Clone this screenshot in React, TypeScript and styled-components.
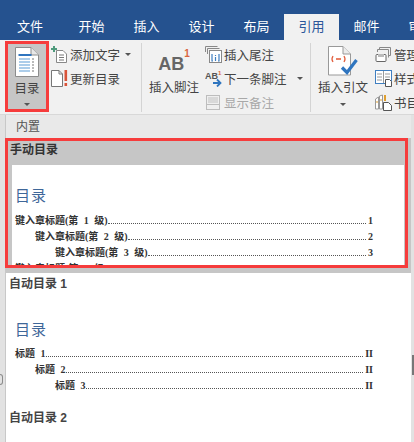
import { ReactNode } from 'react';
import styled, { createGlobalStyle } from 'styled-components';

const GlobalStyle = createGlobalStyle`
  html, body {
    margin: 0;
    padding: 0;
    background: #e2e2e2;
  }
  *, *::before, *::after {
    box-sizing: border-box;
  }
`;

const Page = styled.div`
  position: relative;
  width: 414px;
  height: 442px;
  overflow: hidden;
  background: #e2e2e2;
  color: #444;
  font-family: 'Liberation Sans', 'Noto Sans CJK SC', sans-serif;
  font-size: 12.5px;
`;

const TabBar = styled.div`
  display: flex;
  align-items: flex-end;
  height: 40px;
  background: #25528f;
  white-space: nowrap;
`;

const Tab = styled.div<{ $active?: boolean; $first?: boolean }>`
  flex: none;
  width: ${(p) => (p.$first ? '60px' : '55px')};
  margin-right: ${(p) => (p.$first ? '4px' : '0')};
  height: 26px;
  line-height: 25px;
  text-align: center;
  font-size: 13px;
  color: ${(p) => (p.$active ? '#2b579a' : '#fff')};
  background: ${(p) => (p.$active ? '#f1f1f1' : 'transparent')};
`;

const Ribbon = styled.div`
  display: flex;
  height: 75px;
  padding: 1px 0 3px 5px;
  background: #f1f1f1;
  border-bottom: 1px solid #d8d8d8;
`;

const LargeButton = styled.div<{ $width: number; $left?: number; $selected?: boolean }>`
  flex: none;
  display: flex;
  flex-direction: column;
  align-items: center;
  width: ${(p) => p.$width}px;
  height: 71px;
  margin-left: ${(p) => p.$left ?? 0}px;
  padding-top: ${(p) => (p.$selected ? '2px' : '4px')};
  background: ${(p) => (p.$selected ? '#c6c6c6' : 'transparent')};
  border: ${(p) => (p.$selected ? '3px solid #f63c3c' : 'none')};
  white-space: nowrap;
`;

const LargeIcon = styled.div`
  flex: none;
  height: 31px;
  display: flex;
  align-items: center;
`;

const LargeLabel = styled.div`
  margin-top: 3px;
  line-height: 18px;
`;

const Caret = styled.span<{ $top?: number; $left?: number }>`
  display: block;
  flex: none;
  width: 0;
  height: 0;
  margin-top: ${(p) => p.$top ?? 0}px;
  margin-left: ${(p) => p.$left ?? 0}px;
  border-left: 3px solid transparent;
  border-right: 3px solid transparent;
  border-top: 3px solid #555;
`;

const SmallColumn = styled.div<{ $width: number; $left: number }>`
  flex: none;
  display: flex;
  flex-direction: column;
  width: ${(p) => p.$width}px;
  margin-left: ${(p) => p.$left}px;
  padding-top: 1px;
`;

const SmallRow = styled.div<{ $disabled?: boolean }>`
  flex: none;
  display: flex;
  align-items: center;
  height: 24px;
  white-space: nowrap;
  color: ${(p) => (p.$disabled ? '#a8a8a8' : '#444')};
`;

const SmallIcon = styled.span`
  flex: none;
  display: flex;
  width: 19px;
`;

const Separator = styled.div`
  flex: none;
  width: 1px;
  height: 69px;
  margin-top: 2px;
  background: #d4d4d4;
`;

const FootnoteMark = styled.div`
  display: flex;
  align-items: flex-start;
  height: 26px;
  font-size: 18px;
  font-weight: 700;
  line-height: 32px;
  color: #666;
`;

const FootnoteNumber = styled.span`
  font-size: 10px;
  line-height: 12px;
  color: #d9653f;
`;

const Menu = styled.div`
  width: 406px;
  height: 327px;
  margin-left: 5px;
  background: #fff;
  border-left: 1px solid #c8c8c8;
`;

const MenuHeader = styled.div`
  height: 23px;
  padding-left: 10px;
  line-height: 24px;
  font-size: 12px;
  color: #555;
  background: #e9e9e9;
`;

const GalleryItem = styled.div<{ $selected?: boolean }>`
  position: relative;
  padding-bottom: ${(p) => (p.$selected ? '5px' : '0')};
  background: ${(p) => (p.$selected ? '#c6c6c6' : '#fff')};
  &::after {
    content: '';
    display: ${(p) => (p.$selected ? 'block' : 'none')};
    position: absolute;
    left: -1px;
    top: 0;
    width: 403px;
    height: 130px;
    border: 3px solid #f63c3c;
  }
`;

const ItemTitle = styled.div<{ $selected?: boolean }>`
  height: ${(p) => (p.$selected ? '27px' : '26px')};
  padding-left: ${(p) => (p.$selected ? '4px' : '3px')};
  line-height: ${(p) => (p.$selected ? '25px' : '23px')};
  font-size: 12px;
  font-weight: 700;
  color: ${(p) => (p.$selected ? '#333' : '#444')};
`;

const Preview = styled.div<{ $height: number }>`
  height: ${(p) => p.$height}px;
  margin: 0 7px 0 6px;
  padding: 21px 31px 0 3px;
  overflow: hidden;
  background: #fff;
`;

const PreviewHeading = styled.div<{ $height: number }>`
  height: ${(p) => p.$height}px;
  line-height: 20px;
  font-size: 15px;
  color: #3f6799;
  letter-spacing: 1px;
`;

const TocRow = styled.div<{ $level: number }>`
  display: flex;
  align-items: baseline;
  height: 16px;
  padding-left: ${(p) => (p.$level - 1) * 20}px;
  font-family: 'Liberation Serif', 'Noto Sans CJK SC', serif;
  font-size: 10px;
  font-weight: 700;
  line-height: 16px;
  word-spacing: 3px;
  color: #333;
  white-space: pre;
`;

const Leader = styled.span`
  flex: 1;
  margin: 0 2px 0 0;
  border-bottom: 1px dotted #555;
`;

const Edge = styled.div<{ $side: 'left' | 'right'; $top: number; $height: number }>`
  position: absolute;
  ${(p) => p.$side}: 0;
  top: ${(p) => p.$top}px;
  width: ${(p) => (p.$side === 'left' ? '3px' : '2px')};
  height: ${(p) => p.$height}px;
  background: ${(p) => (p.$side === 'left' ? 'transparent' : '#777')};
  border: ${(p) => (p.$side === 'left' ? '1px solid #8a8a8a' : 'none')};
  border-left: none;
  border-radius: ${(p) => (p.$side === 'left' ? '0 5px 5px 0' : '0')};
`;

const TocIcon = () => (
  <svg width="24" height="30" viewBox="0 0 24 30">
    <path d="M.5.5H16L23.5 8v21.5H.5z" fill="#fff" stroke="#8c8c8c" />
    <path d="M16 .5V8h7.5" fill="#e8e8e8" stroke="#8c8c8c" />
    <rect x="3.5" y="7" width="13" height="2" fill="#2f75bf" />
    <path d="M4 12h11M4 15h11M4 18h11M4 21h11M4 24h11" stroke="#5b9bd5" strokeWidth="1.2" />
    <path d="M17 12h2M17 15h2M17 18h2M17 21h2M17 24h2" stroke="#777" strokeWidth="1.2" />
  </svg>
);

const AddTextIcon = () => (
  <svg width="16" height="17" viewBox="0 0 16 17">
    <path d="M5.5 4.5H12L15.5 8v8.5h-10z" fill="#fff" stroke="#888" />
    <path d="M3 0v6M0 3h6" stroke="#4e9a7c" strokeWidth="2" />
    <path d="M8 9h5M8 11.5h5M8 14h5" stroke="#777" />
  </svg>
);

const UpdateIcon = () => (
  <svg width="17" height="17" viewBox="0 0 17 17">
    <path d="M.5.5H8L11.5 4v12.5H.5z" fill="#fff" stroke="#777" />
    <path d="M8 .5V4h3.5" fill="none" stroke="#777" />
    <rect x="13.5" y="0" width="2.6" height="11" fill="#d9543a" />
    <rect x="13.5" y="13" width="2.6" height="3" fill="#d9543a" />
  </svg>
);

const EndnoteIcon = () => (
  <svg width="17" height="17" viewBox="0 0 17 17">
    <path d="M.5 6V.5h12" fill="none" stroke="#888" />
    <path d="M2.5 8V2.5h12" fill="none" stroke="#888" />
    <rect x="4.5" y="4.5" width="12" height="12" fill="#fff" stroke="#888" />
    <path d="M7 8v7h1M14 8v7h-1M10.5 9v1M10.5 11v4" fill="none" stroke="#3f7fc1" strokeWidth="1.2" />
  </svg>
);

const NextNoteIcon = () => (
  <svg width="18" height="18" viewBox="0 0 18 18">
    <text x="0" y="10" fontFamily="Liberation Sans" fontSize="9" fontWeight="700" fill="#555">
      AB
    </text>
    <text x="13" y="6" fontFamily="Liberation Sans" fontSize="6" fontWeight="700" fill="#d9653f">
      1
    </text>
    <path d="M8 14h7M12 10.5 15.5 14 12 17.5" fill="none" stroke="#2f75bf" strokeWidth="1.8" />
  </svg>
);

const ShowNotesIcon = () => (
  <svg width="17" height="17" viewBox="0 0 17 17">
    <rect x="1.5" y="1.5" width="13" height="14" fill="#efefef" stroke="#bdbdbd" />
    <rect x="3" y="3" width="10" height="6" fill="#d8d8d8" />
    <path d="M1.5 10.5h13" stroke="#bdbdbd" />
  </svg>
);

const CitationIcon = () => (
  <svg width="30" height="30" viewBox="0 0 30 30">
    <path d="M.5.5H15l7.5 7.5v21H.5z" fill="#fff" stroke="#999" />
    <path d="M15 .5V8h7.5" fill="#ececec" stroke="#999" />
    <path d="M5 10q-2 3 0 6M16 10q2 3 0 6" fill="none" stroke="#e2603f" strokeWidth="1.3" />
    <path d="M8 13h5" stroke="#e2603f" strokeWidth="1.6" />
    <path d="M14 21.5l5 5L28.5 14" fill="none" stroke="#2f75bf" strokeWidth="3.2" />
  </svg>
);

const ManageIcon = () => (
  <svg width="17" height="17" viewBox="0 0 17 17">
    <path d="M4.5 4V1.5h11v8h-2" fill="none" stroke="#888" />
    <path d="M2.5 6V3.5h11v8" fill="none" stroke="#888" />
    <rect x="1" y="8.5" width="10" height="7" rx="1" fill="#fff" stroke="#666" />
    <rect x="3" y="8" width="6" height="3" fill="#bbb" />
  </svg>
);

const StyleIcon = () => (
  <svg width="17" height="17" viewBox="0 0 17 17">
    <rect x=".5" y=".5" width="16" height="13" fill="#fff" stroke="#3f7fc1" />
    <path d="M8.5 1v12M2 4h5M2 7h5M2 10h5M10 4h5M10 7h5" stroke="#999" />
    <path d="M10.5 9.5h4l2 2v5h-6z" fill="#fff" stroke="#555" />
  </svg>
);

const BiblioIcon = () => (
  <svg width="17" height="17" viewBox="0 0 17 17">
    <path d="M.5 15V5l3-2v12zM4.5 15V2l3-1v14z" fill="#fff" stroke="#999" />
    <path d="M1.5 8h1M5.5 6h1" stroke="#e0a030" strokeWidth="2" />
    <path d="M10 1v6" stroke="#e0a030" strokeWidth="2" />
    <path d="M8.5 8.5h5l3 3v5h-8z" fill="#fff" stroke="#555" />
  </svg>
);

function Small({ icon, children, disabled }: { icon: ReactNode; children: ReactNode; disabled?: boolean }) {
  return (
    <SmallRow $disabled={disabled}>
      <SmallIcon>{icon}</SmallIcon>
      {children}
    </SmallRow>
  );
}

function Toc({ rows }: { rows: { level: number; text: string; page: string }[] }) {
  return (
    <>
      {rows.map((r) => (
        <TocRow key={r.text} $level={r.level}>
          {r.text}
          <Leader />
          {r.page}
        </TocRow>
      ))}
    </>
  );
}

const tabs = ['开始', '插入', '设计', '布局', '引用', '邮件', '审阅'];

const manualRows = [
  { level: 1, text: '键入章标题(第 1 级)', page: '1' },
  { level: 2, text: '键入章标题(第 2 级)', page: '2' },
  { level: 3, text: '键入章标题(第 3 级)', page: '3' },
  { level: 1, text: '键入章标题(第 4 级)', page: '4' },
];

const autoRows = [
  { level: 1, text: '标题 1', page: 'II' },
  { level: 2, text: '标题 2', page: 'II' },
  { level: 3, text: '标题 3', page: 'II' },
];

export default function App() {
  return (
    <Page>
      <GlobalStyle />
      <TabBar>
        <Tab $first>文件</Tab>
        {tabs.map((t) => (
          <Tab key={t} $active={t === '引用'}>
            {t}
          </Tab>
        ))}
      </TabBar>
      <Ribbon>
        <LargeButton $width={44} $selected>
          <LargeIcon>
            <TocIcon />
          </LargeIcon>
          <LargeLabel>目录</LargeLabel>
          <Caret $top={5} />
        </LargeButton>
        <SmallColumn $width={90} $left={2}>
          <Small icon={<AddTextIcon />}>
            添加文字
            <Caret $left={5} />
          </Small>
          <Small icon={<UpdateIcon />}>更新目录</Small>
        </SmallColumn>
        <Separator />
        <LargeButton $width={52} $left={6}>
          <LargeIcon>
            <FootnoteMark>
              AB
              <FootnoteNumber>1</FootnoteNumber>
            </FootnoteMark>
          </LargeIcon>
          <LargeLabel>插入脚注</LargeLabel>
        </LargeButton>
        <SmallColumn $width={105} $left={5}>
          <Small icon={<EndnoteIcon />}>插入尾注</Small>
          <Small icon={<NextNoteIcon />}>
            下一条脚注
            <Caret $left={10} />
          </Small>
          <Small icon={<ShowNotesIcon />} disabled>
            显示备注
          </Small>
        </SmallColumn>
        <Separator />
        <LargeButton $width={52} $left={6}>
          <LargeIcon>
            <CitationIcon />
          </LargeIcon>
          <LargeLabel>插入引文</LargeLabel>
          <Caret $top={6} />
        </LargeButton>
        <SmallColumn $width={60} $left={6}>
          <Small icon={<ManageIcon />}>管理源</Small>
          <Small icon={<StyleIcon />}>样式</Small>
          <Small icon={<BiblioIcon />}>书目</Small>
        </SmallColumn>
      </Ribbon>
      <Menu>
        <MenuHeader>内置</MenuHeader>
        <GalleryItem $selected>
          <ItemTitle $selected>手动目录</ItemTitle>
          <Preview $height={103}>
            <PreviewHeading $height={27}>目录</PreviewHeading>
            <Toc rows={manualRows} />
          </Preview>
        </GalleryItem>
        <GalleryItem>
          <ItemTitle>自动目录 1</ItemTitle>
          <Preview $height={108}>
            <PreviewHeading $height={26}>目录</PreviewHeading>
            <Toc rows={autoRows} />
          </Preview>
        </GalleryItem>
        <GalleryItem>
          <ItemTitle>自动目录 2</ItemTitle>
        </GalleryItem>
      </Menu>
      <Edge $side="left" $top={374} $height={11} />
      <Edge $side="right" $top={355} $height={20} />
    </Page>
  );
}
